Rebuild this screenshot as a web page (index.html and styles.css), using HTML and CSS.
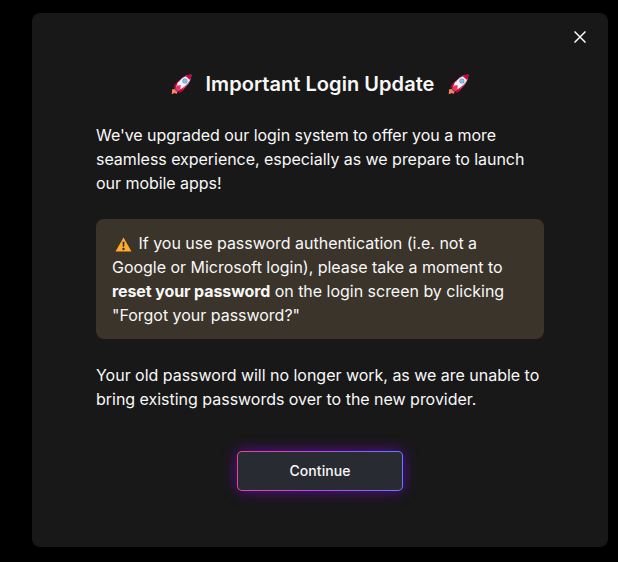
FILE: index.html
```
<!DOCTYPE html>
<html lang="en">
<head>
<meta charset="utf-8">
<title>Important Login Update</title>
<link rel="stylesheet" href="styles.css">
</head>
<body>
<svg width="0" height="0" class="defs" aria-hidden="true">
  <symbol id="rocket" viewBox="0 0 21 21">
    <path d="M1 15.5 5 14.5 7 17 5.5 20 3.8 19 .8 20.2Z" fill="#ff8354"/>
    <path d="M9 7C6 7.500 3.500 9.800 2.500 14L6.500 12.500ZM14 12C14.200 15.500 11.500 18 7.500 19L8.500 14.500Z" fill="#c90045"/>
    <path d="M20.300.700C15 .800 10.500 3.500 7 8L4.500 14.200 7 16.800 13.500 14C17.500 10.500 20.200 6 20.300.700Z" fill="#f5f3f4"/>
    <path d="M20.300.700C18 .600 16 1.100 14.500 2L19 6C20 4.800 20.400 2.700 20.300.700Z" fill="#cf0148"/>
    <path d="M20.300.700C15 .800 10.500 3.500 7.500 8" fill="none" stroke="#b80a45" stroke-width=".8"/>
    <path d="M19.500 5C18 9.500 15.500 12.500 12 14.800L7 17.200 8 16C13.500 13.300 16.500 10.500 19.500 5Z" fill="#c50845"/>
    <path d="M4 15 6 11.500 9.800 11.200 9.300 15 6.300 17.400Z" fill="#f72d5e"/>
    <path d="M4.100 14.300 7 17.300 6 18 3.400 15.300Z" fill="#665063"/>
    <circle cx="13.900" cy="6.900" r="2.500" fill="#4f8eae"/>
    <circle cx="13.900" cy="6.900" r="2" fill="#7fc5ef"/>
  </symbol>
</svg>
<main class="modal">
  <button class="close" aria-label="Close">
    <svg viewBox="0 0 12 12" width="12" height="12"><path d="M.5.500 11.500 11.500M11.500.500.500 11.500"/></svg>
  </button>
  <h1 class="title">
    <svg class="rocket"><use href="#rocket"/></svg>
    <span>Important Login Update</span>
    <svg class="rocket"><use href="#rocket"/></svg>
  </h1>
  <p class="text">We've upgraded our login system to offer you a more seamless experience, especially as we prepare to launch our mobile apps!</p>
  <p class="notice"><svg class="warning" viewBox="0 0 17 15"><path d="M8.500.500 16.500 14.500H.500Z" fill="#ffab2e"/><path d="M7.500 4.700h2l-.300 5h-1.400Z" fill="#38302b"/><circle cx="8.500" cy="12" r="1.200" fill="#38302b"/></svg>If you use password authentication (i.e. not a Google or Microsoft login), please take a moment to <strong>reset your password</strong> on the login screen by clicking "Forgot your password?"</p>
  <p class="text last">Your old password will no longer work, as we are unable to bring existing passwords over to the new provider.</p>
  <button class="continue">Continue</button>
</main>
</body>
</html>
```
FILE: styles.css
```
* { box-sizing: border-box; }
body {
  margin: 0;
  padding: 13px 10px 15px 32px;
  height: 562px;
  overflow: hidden;
  background: #000;
  color: #f8f8f8;
  font: 16px/24px Inter, sans-serif;
}
.defs { position: absolute; }
.modal {
  position: relative;
  display: flex;
  flex-direction: column;
  height: 534px;
  padding: 57px 64px 0;
  border-radius: 8px;
  background: #181818;
}
.close {
  position: absolute;
  top: 18px;
  right: 22px;
  width: 12px;
  height: 12px;
  padding: 0;
  border: 0;
  background: none;
}
.close svg {
  display: block;
  fill: none;
  stroke: #f8f8f8;
  stroke-width: 1.5;
}
.title {
  display: flex;
  justify-content: center;
  align-items: center;
  gap: 13.5px;
  margin: 0 0 25px;
  font-size: 20px;
  line-height: 28px;
  font-weight: 600;
  letter-spacing: 0.05px;
}
.rocket { width: 21px; height: 21px; }
.text {
  margin: 0;
  letter-spacing: -0.04px;
}
.last { letter-spacing: -0.02px; }
.notice {
  margin: 24px 0;
  padding: 12px 16px;
  border-radius: 8px;
  background: #3b342a;
  letter-spacing: -0.02px;
}
.warning {
  width: 17px;
  height: 15px;
  margin: 0 7px 0 2.5px;
  vertical-align: -3px;
}
.notice strong {
  font-weight: 700;
  letter-spacing: -0.1px;
}
.continue {
  align-self: center;
  width: 166px;
  height: 40px;
  margin-top: 40px;
  border: 1px solid transparent;
  border-radius: 5px;
  background: linear-gradient(#292b33, #292b33) padding-box,
    linear-gradient(90deg, #e64c8c, #b04be8 50%, #5c80ff) border-box;
  box-shadow: 0 0 14px #5b0a9c;
  color: #f8f8f8;
  font: 450 14px/20px Inter, sans-serif;
  letter-spacing: 0.05px;
}
```
